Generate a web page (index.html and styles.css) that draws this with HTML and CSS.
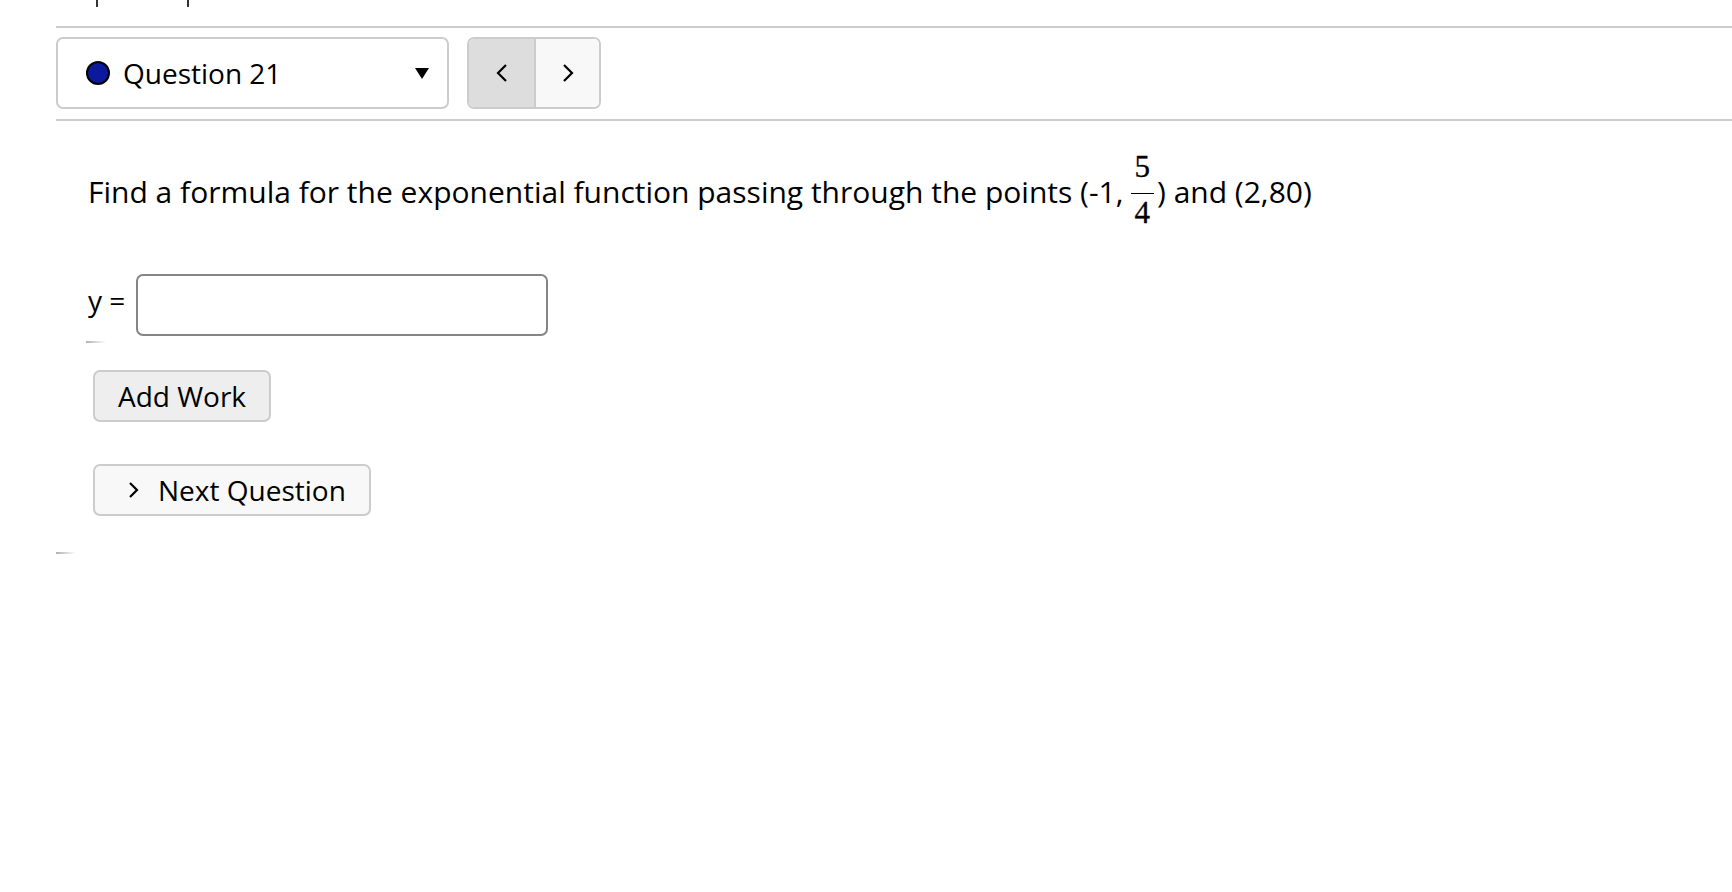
FILE: index.html
```html
<!DOCTYPE html>
<html lang="en">
<head>
<meta charset="utf-8">
<title>Question 21</title>
<link rel="stylesheet" href="styles.css">
</head>
<body>
<div class="page">
  <div class="clip-top"><span class="desc d1"></span><span class="desc d2"></span></div>
  <div class="content">
    <div class="rule"></div>
    <div class="nav-row">
      <div class="select">
        <span class="dot"></span>
        <span class="select-label">Question 21</span>
        <svg class="caret" width="14" height="11" viewBox="0 0 14 11"><polygon points="0,0 14,0 7,11" fill="#000"/></svg>
      </div>
      <div class="pager">
        <button class="pg pg-prev" type="button"><svg width="12" height="18" viewBox="0 0 12 18"><polyline points="10,1 2,9 10,17" fill="none" stroke="#000" stroke-width="2.2"/></svg></button>
        <button class="pg pg-next" type="button"><svg width="12" height="18" viewBox="0 0 12 18"><polyline points="2,1 10,9 2,17" fill="none" stroke="#000" stroke-width="2.2"/></svg></button>
      </div>
    </div>
    <div class="rule"></div>
    <div class="question">
      <p class="prompt">Find a formula for the exponential function passing through the points (-1,<span class="frac"><span class="num">5</span><span class="den">4</span></span>) and (2,80)</p>
      <div class="answer-row">
        <label class="ans-label" for="ans">y =</label>
        <input class="ans-input" id="ans" type="text">
      </div>
      <div class="fade-line"></div>
      <div class="btn-wrap work-wrap"><button class="btn btn-work" type="button">Add Work</button></div>
      <div class="btn-wrap next-wrap"><button class="btn btn-next" type="button"><svg width="11" height="16" viewBox="0 0 11 16"><polyline points="2,1 9,8 2,15" fill="none" stroke="#000" stroke-width="2.2"/></svg><span>Next Question</span></button></div>
    </div>
    <div class="fade-line end"></div>
  </div>
</div>
</body>
</html>
```
FILE: styles.css
```css
html, body {
  margin: 0;
  padding: 0;
  background: #fff;
}
body {
  font-family: "Open Sans", "Noto Sans", sans-serif;
  font-size: 28px;
  color: #000;
}
.page {
  width: 1732px;
}
.clip-top {
  height: 26px;
  display: flex;
  align-items: flex-start;
}
.desc {
  display: block;
  width: 2px;
  height: 7px;
  background: #333;
}
.d1 { margin-left: 96px; }
.d2 { margin-left: 89px; }
.content {
  margin-left: 56px;
}
.rule {
  height: 2px;
  background: #cccccc;
}
.nav-row {
  display: flex;
  align-items: stretch;
  gap: 18px;
  margin: 9px 0 10px;
  height: 72px;
}
.select {
  box-sizing: border-box;
  width: 393px;
  height: 72px;
  border: 2px solid #cccccc;
  border-radius: 7px;
  background: #fff;
  display: flex;
  align-items: center;
  padding-left: 28px;
  padding-right: 18px;
}
.dot {
  box-sizing: border-box;
  width: 24px;
  height: 24px;
  border-radius: 50%;
  border: 2px solid #000;
  background: #0b1a9c;
  flex: none;
}
.select-label {
  margin-left: 13px;
  flex: 1;
  line-height: 38px;
}
.caret {
  display: block;
  flex: none;
}
.pager {
  box-sizing: border-box;
  width: 134px;
  height: 72px;
  border: 2px solid #cccccc;
  border-radius: 7px;
  overflow: hidden;
  display: flex;
}
.pg {
  margin: 0;
  padding: 0;
  border: 0;
  height: 100%;
  display: flex;
  align-items: center;
  justify-content: center;
}
.pg svg { display: block; }
.pg-prev {
  width: 67px;
  background: #dddddd;
  border-right: 2px solid #cccccc;
}
.pg-next {
  width: 63px;
  background: #f8f8f8;
}
.prompt {
  margin: 30px 0 0;
  padding-left: 32px;
  font-size: 30px;
  line-height: 38px;
  white-space: nowrap;
}
.frac {
  display: inline-flex;
  flex-direction: column;
  align-items: center;
  vertical-align: 26px;
  font-family: "Liberation Serif", "DejaVu Serif", serif;
  font-size: 31px;
  line-height: 1;
  -webkit-text-stroke: 0.3px #000;
  margin: 0 3px 0 7px;
}
.num {
  padding: 0 4px 11px;
  border-bottom: 1.6px solid #000;
}
.den {
  padding: 3px 4px 0;
}
.answer-row {
  display: flex;
  align-items: center;
  margin-top: 46px;
  padding-left: 32px;
}
.ans-label {
  margin-bottom: 10px;
  line-height: 38px;
}
.ans-input {
  box-sizing: border-box;
  margin-left: 11px;
  width: 412px;
  height: 62px;
  border: 2px solid #858585;
  border-radius: 7px;
  background: #fff;
  font: inherit;
  padding: 0 10px;
  outline: none;
}
.fade-line {
  margin: 5px 0 0 30px;
  width: 20px;
  height: 2px;
  background: linear-gradient(to right, #b0b0b0, rgba(200, 200, 200, 0));
}
.fade-line.end {
  margin: 36px 0 0 0;
}
.btn-wrap {
  padding-left: 37px;
}
.work-wrap { margin-top: 27px; }
.next-wrap { margin-top: 42px; }
.btn {
  box-sizing: border-box;
  height: 52px;
  border: 2px solid #cccccc;
  border-radius: 7px;
  font-family: "Open Sans", "Noto Sans", sans-serif;
  font-size: 28px;
  color: #000;
  line-height: 38px;
  padding: 0;
  margin: 0;
}
.btn-work {
  width: 178px;
  background: #eeeeee;
  text-align: center;
}
.btn-next {
  width: 278px;
  background: #f8f8f8;
  display: flex;
  align-items: center;
  padding-left: 33px;
  gap: 19px;
}
.btn-next svg { display: block; flex: none; }
```
